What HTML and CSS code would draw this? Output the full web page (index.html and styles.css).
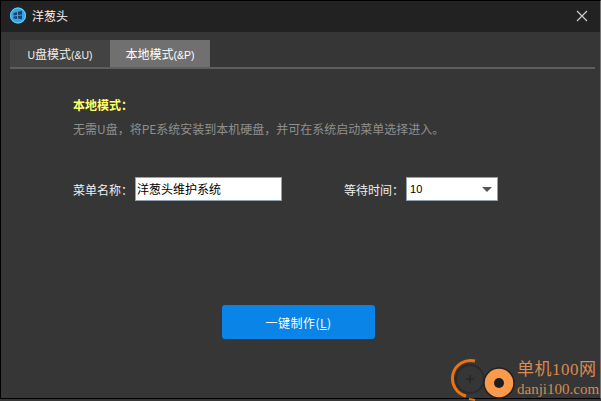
FILE: index.html
```html
<!DOCTYPE html>
<html>
<head>
	<title>洋葱头</title>
	<link rel="stylesheet" href="styles.css">
</head>
<body>
	<div class="window">
		<div class="titlebar">
			<svg class="app-icon" width="18" height="18" viewBox="0 0 18 18">
				<circle cx="9" cy="8.500" r="8" fill="#33a6ea"/>
				<circle cx="9" cy="8.500" r="7.500" fill="none" stroke="#6fd0fa" stroke-width="1"/>
				<path d="M4.500 6l3.500-1v3l-3.500 .5zM9 4.800l4-1v3.600l-4 .5zM4.500 9.500l3.500-.5v3l-3.500-.6zM9 8.900l4-.5v3.800l-4-.7z" fill="#1d4468"/>
			</svg>
			<span class="title">洋葱头</span>
			<svg class="close" width="12" height="12" viewBox="0 0 12 12">
				<path d="M1 1l10 10M11 1L1 11" stroke="#c8c8c8" stroke-width="1.300" fill="none"/>
			</svg>
		</div>
		<div class="tabs">
			<div class="tab"><span class="lt">U</span>盘模式<span class="lt">(&amp;U)</span></div>
			<div class="tab active">本地模式<span class="lt">(&amp;P)</span></div>
		</div>
		<div class="content">
			<h1>本地模式：</h1>
			<p class="desc">无需U盘，将PE系统安装到本机硬盘，并可在系统启动菜单选择进入。</p>
			<div class="fields">
				<label class="field name-field">菜单名称：
					<span class="input">洋葱头维护系统</span>
				</label>
				<label class="field">等待时间：
					<span class="select">10<i class="arrow"></i></span>
				</label>
			</div>
			<div class="actions">
				<button class="make" type="button">一键制作(<u>L</u>)</button>
			</div>
		</div>
	</div>
	<div class="watermark">
		<svg width="67" height="43" viewBox="0 0 67 43">
			<path d="M25 3a18 18 0 0 0 -9 35" fill="none" stroke="#f0720f" stroke-width="3"/>
			<path d="M19 41l6 1" fill="none" stroke="#f0720f" stroke-width="2"/>
			<circle cx="20" cy="21" r="14" fill="none" stroke="#2a2a2a" stroke-width="2"/>
			<path d="M20 17v8M16 21h8" stroke="#222" stroke-width="1.200"/>
			<circle cx="49" cy="25" r="15" fill="#fb9a4b" stroke="#222" stroke-width="1.500"/>
			<circle cx="49" cy="25" r="5" fill="#1e1e1e"/>
		</svg>
		<div class="wm-text">
			<div class="wm-cn">单机100网</div>
			<div class="wm-en">danji100.com</div>
		</div>
	</div>
</body>
</html>
```

FILE: styles.css
```css
html, body {
	margin: 0;
	height: 100%;
	background: #363636;
}

body {
	position: relative;
	overflow: hidden;
	font-family: "Noto Sans CJK SC", "Liberation Sans", sans-serif;
	font-size: 12px;
	color: #fff;
}

.window {
	height: 399px;
	box-sizing: border-box;
	border: 1px solid #000;
	border-right-color: #777;
	background: #363636;
}

.titlebar {
	display: flex;
	align-items: center;
	height: 31px;
	padding: 0 12px 2px 8px;
	box-sizing: border-box;
	background: #222;
}

.app-icon {
	margin-right: 5px;
}

.title {
	flex: 1;
	font-size: 12px;
	color: #f2f2f2;
}

.tabs {
	display: flex;
	margin: 8px 5px 0 9px;
	border-bottom: 2px solid #5e5e5e;
}

.tab {
	width: 100px;
	height: 27px;
	line-height: 27px;
	text-align: center;
	background: #434343;
	color: #eee;
}

.tab.active {
	background: #707070;
	color: #fff;
}

.lt {
	font-family: "Liberation Sans", sans-serif;
	font-size: 10.500px;
}

.content {
	padding: 0 0 0 72px;
}

h1 {
	margin: 27px 0 0;
	font-size: 12px;
	font-weight: bold;
	line-height: 17px;
	color: #ffff66;
}

.desc {
	margin: 7px 0 0;
	line-height: 17px;
	color: #8f8f8f;
}

.fields {
	display: flex;
	align-items: center;
	margin-top: 40px;
}

.field {
	display: flex;
	align-items: center;
	color: #eee;
}

.name-field {
	width: 271px;
}

.input, .select {
	display: block;
	box-sizing: border-box;
	height: 24px;
	line-height: 22px;
	margin-left: 2px;
	border: 1px solid #8fa3b3;
	background: #fff;
	color: #000;
	padding-left: 1px;
}

.input {
	width: 147px;
}

.select {
	position: relative;
	width: 92px;
	padding-left: 3px;
	font-family: "Liberation Sans", sans-serif;
	font-size: 11px;
}

.arrow {
	position: absolute;
	right: 5px;
	top: 9px;
	border: 5px solid transparent;
	border-top: 5px solid #555;
	border-bottom: 0;
}

.actions {
	margin: 104px 0 0 149px;
}

.make {
	display: block;
	width: 153px;
	height: 34px;
	border: none;
	border-radius: 3px;
	background: #0a84e6;
	color: #fff;
	font-family: inherit;
	font-size: 12px;
	letter-spacing: 0.5px;
}

.watermark {
	position: absolute;
	left: 450px;
	top: 358px;
	display: flex;
	width: 151px;
}

.wm-text {
	color: #d98a50;
	white-space: nowrap;
}

.wm-cn {
	font-family: "Liberation Serif", "Noto Sans CJK SC", serif;
	font-size: 17px;
	line-height: 23px;
	height: 23px;
	letter-spacing: 0.5px;
}

.wm-en {
	font-family: "Liberation Serif", serif;
	font-size: 15px;
	line-height: 17px;
}
```
